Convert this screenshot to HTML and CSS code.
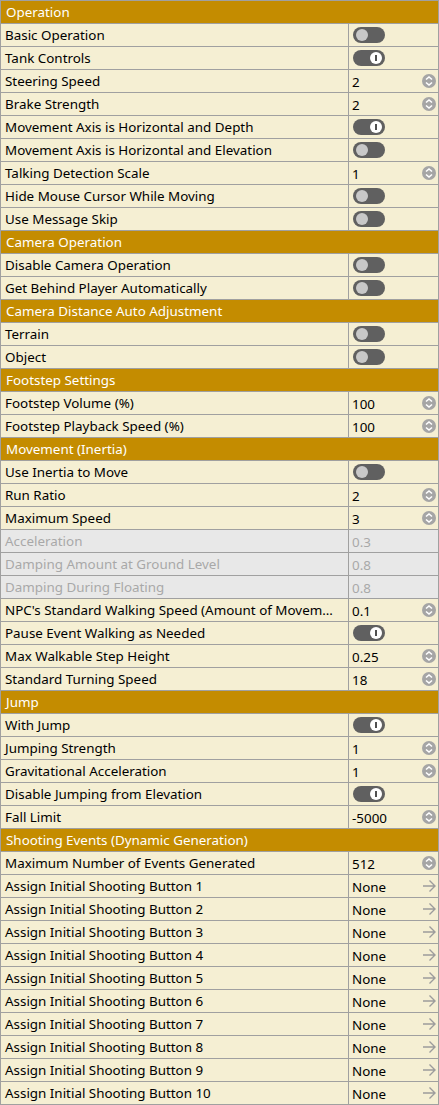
FILE: index.html
```html
<!DOCTYPE html>
<html lang="en">

<head>
    <meta charset="UTF-8">
    <meta name="viewport" content="width=device-width, initial-scale=1.0">
    <title>Settings</title>
    <link rel="stylesheet" href="styles.css">
</head>

<body>
    <div id="settings">
        <div class="section">Operation</div>
        <div class="row"><span class="label">Basic Operation</span><span class="value"><span class="toggle"></span></span></div>
        <div class="row"><span class="label">Tank Controls</span><span class="value"><span class="toggle on"></span></span></div>
        <div class="row"><span class="label">Steering Speed</span><span class="value num">2<svg class="spin" viewBox="0 0 14 14"><circle cx="7" cy="7" r="7"/><path d="M4 5.5L7 3L10 5.5M4 8.5L7 11L10 8.5"/></svg></span></div>
        <div class="row"><span class="label">Brake Strength</span><span class="value num">2<svg class="spin" viewBox="0 0 14 14"><circle cx="7" cy="7" r="7"/><path d="M4 5.5L7 3L10 5.5M4 8.5L7 11L10 8.5"/></svg></span></div>
        <div class="row"><span class="label">Movement Axis is Horizontal and Depth</span><span class="value"><span class="toggle on"></span></span></div>
        <div class="row"><span class="label">Movement Axis is Horizontal and Elevation</span><span class="value"><span class="toggle"></span></span></div>
        <div class="row"><span class="label">Talking Detection Scale</span><span class="value num">1<svg class="spin" viewBox="0 0 14 14"><circle cx="7" cy="7" r="7"/><path d="M4 5.5L7 3L10 5.5M4 8.5L7 11L10 8.5"/></svg></span></div>
        <div class="row"><span class="label">Hide Mouse Cursor While Moving</span><span class="value"><span class="toggle"></span></span></div>
        <div class="row"><span class="label">Use Message Skip</span><span class="value"><span class="toggle"></span></span></div>

        <div class="section">Camera Operation</div>
        <div class="row"><span class="label">Disable Camera Operation</span><span class="value"><span class="toggle"></span></span></div>
        <div class="row"><span class="label">Get Behind Player Automatically</span><span class="value"><span class="toggle"></span></span></div>

        <div class="section">Camera Distance Auto Adjustment</div>
        <div class="row"><span class="label">Terrain</span><span class="value"><span class="toggle"></span></span></div>
        <div class="row"><span class="label">Object</span><span class="value"><span class="toggle"></span></span></div>

        <div class="section">Footstep Settings</div>
        <div class="row"><span class="label">Footstep Volume (%)</span><span class="value num">100<svg class="spin" viewBox="0 0 14 14"><circle cx="7" cy="7" r="7"/><path d="M4 5.5L7 3L10 5.5M4 8.5L7 11L10 8.5"/></svg></span></div>
        <div class="row"><span class="label">Footstep Playback Speed (%)</span><span class="value num">100<svg class="spin" viewBox="0 0 14 14"><circle cx="7" cy="7" r="7"/><path d="M4 5.5L7 3L10 5.5M4 8.5L7 11L10 8.5"/></svg></span></div>

        <div class="section">Movement (Inertia)</div>
        <div class="row"><span class="label">Use Inertia to Move</span><span class="value"><span class="toggle"></span></span></div>
        <div class="row"><span class="label">Run Ratio</span><span class="value num">2<svg class="spin" viewBox="0 0 14 14"><circle cx="7" cy="7" r="7"/><path d="M4 5.5L7 3L10 5.5M4 8.5L7 11L10 8.5"/></svg></span></div>
        <div class="row"><span class="label">Maximum Speed</span><span class="value num">3<svg class="spin" viewBox="0 0 14 14"><circle cx="7" cy="7" r="7"/><path d="M4 5.5L7 3L10 5.5M4 8.5L7 11L10 8.5"/></svg></span></div>
        <div class="row disabled"><span class="label">Acceleration</span><span class="value">0.3</span></div>
        <div class="row disabled"><span class="label">Damping Amount at Ground Level</span><span class="value">0.8</span></div>
        <div class="row disabled"><span class="label">Damping During Floating</span><span class="value">0.8</span></div>
        <div class="row"><span class="label">NPC's Standard Walking Speed (Amount of Movem…</span><span class="value num">0.1<svg class="spin" viewBox="0 0 14 14"><circle cx="7" cy="7" r="7"/><path d="M4 5.5L7 3L10 5.5M4 8.5L7 11L10 8.5"/></svg></span></div>
        <div class="row"><span class="label">Pause Event Walking as Needed</span><span class="value"><span class="toggle on"></span></span></div>
        <div class="row"><span class="label">Max Walkable Step Height</span><span class="value num">0.25<svg class="spin" viewBox="0 0 14 14"><circle cx="7" cy="7" r="7"/><path d="M4 5.5L7 3L10 5.5M4 8.5L7 11L10 8.5"/></svg></span></div>
        <div class="row"><span class="label">Standard Turning Speed</span><span class="value num">18<svg class="spin" viewBox="0 0 14 14"><circle cx="7" cy="7" r="7"/><path d="M4 5.5L7 3L10 5.5M4 8.5L7 11L10 8.5"/></svg></span></div>

        <div class="section">Jump</div>
        <div class="row"><span class="label">With Jump</span><span class="value"><span class="toggle on"></span></span></div>
        <div class="row"><span class="label">Jumping Strength</span><span class="value num">1<svg class="spin" viewBox="0 0 14 14"><circle cx="7" cy="7" r="7"/><path d="M4 5.5L7 3L10 5.5M4 8.5L7 11L10 8.5"/></svg></span></div>
        <div class="row"><span class="label">Gravitational Acceleration</span><span class="value num">1<svg class="spin" viewBox="0 0 14 14"><circle cx="7" cy="7" r="7"/><path d="M4 5.5L7 3L10 5.5M4 8.5L7 11L10 8.5"/></svg></span></div>
        <div class="row"><span class="label">Disable Jumping from Elevation</span><span class="value"><span class="toggle on"></span></span></div>
        <div class="row"><span class="label">Fall Limit</span><span class="value num">-5000<svg class="spin" viewBox="0 0 14 14"><circle cx="7" cy="7" r="7"/><path d="M4 5.5L7 3L10 5.5M4 8.5L7 11L10 8.5"/></svg></span></div>

        <div class="section">Shooting Events (Dynamic Generation)</div>
        <div class="row"><span class="label">Maximum Number of Events Generated</span><span class="value num">512<svg class="spin" viewBox="0 0 14 14"><circle cx="7" cy="7" r="7"/><path d="M4 5.5L7 3L10 5.5M4 8.5L7 11L10 8.5"/></svg></span></div>
        <div class="row"><span class="label">Assign Initial Shooting Button 1</span><span class="value link">None<svg class="arrow" viewBox="0 0 14 14"><path d="M1 7H13M7.5 1.5L13 7L7.5 12.5"/></svg></span></div>
        <div class="row"><span class="label">Assign Initial Shooting Button 2</span><span class="value link">None<svg class="arrow" viewBox="0 0 14 14"><path d="M1 7H13M7.5 1.5L13 7L7.5 12.5"/></svg></span></div>
        <div class="row"><span class="label">Assign Initial Shooting Button 3</span><span class="value link">None<svg class="arrow" viewBox="0 0 14 14"><path d="M1 7H13M7.5 1.5L13 7L7.5 12.5"/></svg></span></div>
        <div class="row"><span class="label">Assign Initial Shooting Button 4</span><span class="value link">None<svg class="arrow" viewBox="0 0 14 14"><path d="M1 7H13M7.5 1.5L13 7L7.5 12.5"/></svg></span></div>
        <div class="row"><span class="label">Assign Initial Shooting Button 5</span><span class="value link">None<svg class="arrow" viewBox="0 0 14 14"><path d="M1 7H13M7.5 1.5L13 7L7.5 12.5"/></svg></span></div>
        <div class="row"><span class="label">Assign Initial Shooting Button 6</span><span class="value link">None<svg class="arrow" viewBox="0 0 14 14"><path d="M1 7H13M7.5 1.5L13 7L7.5 12.5"/></svg></span></div>
        <div class="row"><span class="label">Assign Initial Shooting Button 7</span><span class="value link">None<svg class="arrow" viewBox="0 0 14 14"><path d="M1 7H13M7.5 1.5L13 7L7.5 12.5"/></svg></span></div>
        <div class="row"><span class="label">Assign Initial Shooting Button 8</span><span class="value link">None<svg class="arrow" viewBox="0 0 14 14"><path d="M1 7H13M7.5 1.5L13 7L7.5 12.5"/></svg></span></div>
        <div class="row"><span class="label">Assign Initial Shooting Button 9</span><span class="value link">None<svg class="arrow" viewBox="0 0 14 14"><path d="M1 7H13M7.5 1.5L13 7L7.5 12.5"/></svg></span></div>
        <div class="row"><span class="label">Assign Initial Shooting Button 10</span><span class="value link">None<svg class="arrow" viewBox="0 0 14 14"><path d="M1 7H13M7.5 1.5L13 7L7.5 12.5"/></svg></span></div>
    </div>
</body>

</html>
```

FILE: styles.css
```css
body {
    margin: 0;
    background-color: #f5efd3;
    font-family: "Noto Sans", "DejaVu Sans", sans-serif;
    font-size: 13.4px;
    color: #000000;
}

#settings {
    width: 437px;
    border: 1px solid #a0a0a0;
    border-bottom: none;
}

.section {
    height: 21px;
    line-height: 21px;
    padding-top: 1px;
    padding-left: 5px;
    background-color: #c48c00;
    color: #ffffff;
    border-bottom: 1px solid #a0a0a0;
}

.row {
    display: grid;
    grid-template-columns: 348px 1fr;
    height: 22px;
    background-color: #f5efd3;
    border-bottom: 1px solid #a0a0a0;
}

.label {
    padding: 1px 4px 0 4px;
    line-height: 21px;
    border-right: 1px solid #a0a0a0;
    white-space: nowrap;
    overflow: hidden;
    text-overflow: ellipsis;
}

.value {
    display: flex;
    align-items: center;
    padding-left: 3px;
    padding-right: 2px;
    padding-top: 1px;
    white-space: nowrap;
}

.num,
.link {
    justify-content: space-between;
}

.disabled {
    background-color: #e8e8e8;
    color: #a8a8a8;
}

.spin {
    width: 14px;
    height: 14px;
    margin-top: -1px;
}

.spin circle {
    fill: #a5a5a5;
}

.spin path {
    fill: none;
    stroke: #ffffff;
    stroke-width: 1.6;
}

.arrow {
    width: 14px;
    height: 14px;
    margin-top: -1px;
}

.arrow path {
    fill: none;
    stroke: #9c9c9c;
    stroke-width: 1.4;
}

/* pill switch, knob sits on top */
.toggle {
    position: relative;
    display: inline-block;
    width: 32px;
    height: 16px;
    margin-left: 1px;
    margin-top: -1px;
    border-radius: 8px;
    background-color: #606060;
}

.toggle:after {
    content: "";
    position: absolute;
    left: 3px;
    top: 2px;
    width: 12px;
    height: 12px;
    border-radius: 50%;
    background-color: #c8c8c8;
}

.toggle.on:after {
    left: 17px;
    background-color: #ffffff;
}

.toggle.on:before {
    content: "";
    position: absolute;
    left: 22px;
    top: 5px;
    width: 2px;
    height: 6px;
    background-color: #505050;
    z-index: 2;
}
```
